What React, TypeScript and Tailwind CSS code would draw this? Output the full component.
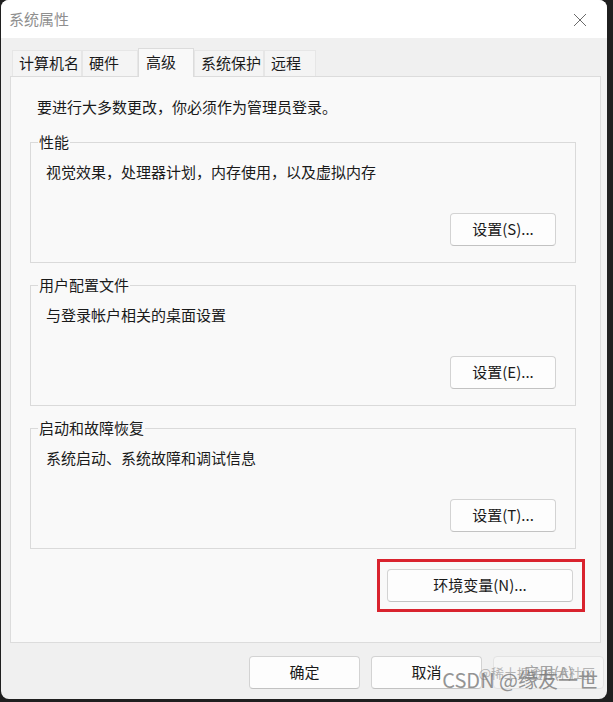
import React from "react";

const font = { fontFamily: '"Noto Sans CJK SC", "Noto Sans", sans-serif' };

interface TabProps {
  label: string;
  width: string;
  active?: boolean;
}

const Tab: React.FC<TabProps> = ({ label, width, active }) => {
  if (active) {
    return (
      <div
        className={`${width} h-[29px] -mb-px relative z-10 flex items-center pl-[7px] pb-[2px] bg-[#f9f9f9] border border-b-0 border-[#dcdcdc] text-[15px] text-[#1a1a1a]`}
      >
        {label}
      </div>
    );
  }
  return (
    <div
      className={`${width} h-[26px] flex items-center pl-[6px] bg-[#f4f4f4] border border-b-0 border-[#e6e6e6] text-[15px] text-[#1a1a1a]`}
    >
      {label}
    </div>
  );
};

interface ButtonProps {
  label: string;
  width?: string;
  disabled?: boolean;
}

const WinButton: React.FC<ButtonProps> = ({ label, width = "w-[106px]", disabled }) => (
  <button
    type="button"
    className={`${width} h-[33px] rounded-[4px] border text-[15px] flex items-center justify-center ${
      disabled
        ? "bg-[#f5f5f5] border-[#e3e3e3] text-[#a3a3a3]"
        : "bg-[#fdfdfd] border-[#d3d3d3] border-b-[#c2c2c2] text-[#1a1a1a]"
    }`}
  >
    {label}
  </button>
);

interface GroupProps {
  title: string;
  text: string;
  button: string;
}

const GroupBox: React.FC<GroupProps> = ({ title, text, button }) => (
  <fieldset className="border border-[#dadada] ml-[19px] mr-[24px] px-[15px] pb-[16px] h-[131px]">
    <legend className="-ml-[8px] px-[1px] text-[15px] leading-[20px] text-[#1a1a1a]">{title}</legend>
    <div className="mt-[10px] text-[15px] leading-[20px] text-[#1a1a1a]">{text}</div>
    <div className="flex justify-end mt-[31px] mr-[4px]">
      <WinButton label={button} />
    </div>
  </fieldset>
);

export default function App() {
  return (
    <div className="w-[613px] h-[702px] bg-[#1f1f1f] pl-[1px] overflow-hidden" style={font}>
      <div className="relative w-[606px] h-[699px] rounded-[8px] overflow-hidden flex flex-col bg-[#f0f0f0]">
        {/* title bar */}
        <div className="h-[38px] bg-white flex items-center justify-between pl-[8px] pr-[20px]">
          <span className="text-[15px] text-[#8f8f8f]">系统属性</span>
          <svg width="14" height="14" viewBox="0 0 14 14" className="mt-[1px]">
            <path d="M1 1 L13 13 M13 1 L1 13" stroke="#6a6a6a" strokeWidth="1" fill="none" />
          </svg>
        </div>

        <div className="flex-1 flex flex-col pl-[9px] pr-[6px] pt-[9px]">
          {/* tabs */}
          <div className="flex items-end pl-[2px] h-[29px]">
            <Tab label="计算机名" width="w-[70px]" />
            <Tab label="硬件" width="w-[56px]" />
            <Tab label="高级" width="w-[56px]" active />
            <Tab label="系统保护" width="w-[70px]" />
            <Tab label="远程" width="w-[52px]" />
          </div>

          {/* panel */}
          <div className="h-[567px] bg-[#f9f9f9] border border-[#dcdcdc] flex flex-col">
            <div className="pl-[26px] pt-[20px] text-[15px] leading-[20px] text-[#1a1a1a]">
              要进行大多数更改，你必须作为管理员登录。
            </div>
            <div className="mt-[15px] flex flex-col gap-[12px]">
              <GroupBox title="性能" text="视觉效果，处理器计划，内存使用，以及虚拟内存" button="设置(S)..." />
              <GroupBox title="用户配置文件" text="与登录帐户相关的桌面设置" button="设置(E)..." />
              <GroupBox title="启动和故障恢复" text="系统启动、系统故障和调试信息" button="设置(T)..." />
            </div>
            <div className="flex justify-end mt-[10px] mr-[15px]">
              <div className="border-[3px] border-[#d9232e] pl-[7px] pr-[9px] py-[7px]">
                <WinButton label="环境变量(N)..." width="w-[186px]" />
              </div>
            </div>
          </div>

          {/* bottom buttons */}
          <div className="flex justify-end gap-[11px] mt-[13px] -mr-[3px]">
            <WinButton label="确定" width="w-[111px]" />
            <WinButton label="取消" width="w-[111px]" />
            <WinButton label="应用(A)" width="w-[111px]" disabled />
          </div>
        </div>

        {/* watermark */}
        <div className="absolute right-[12px] bottom-[17px] text-[13px] text-[#9a9a9a] opacity-70 pointer-events-none">
          @稀土掘金技术社区
        </div>
        <div className="absolute right-[9px] bottom-[4px] text-[20px] text-[#7a7a7a] opacity-80 pointer-events-none">
          CSDN @缘友一世
        </div>
      </div>
    </div>
  );
}
